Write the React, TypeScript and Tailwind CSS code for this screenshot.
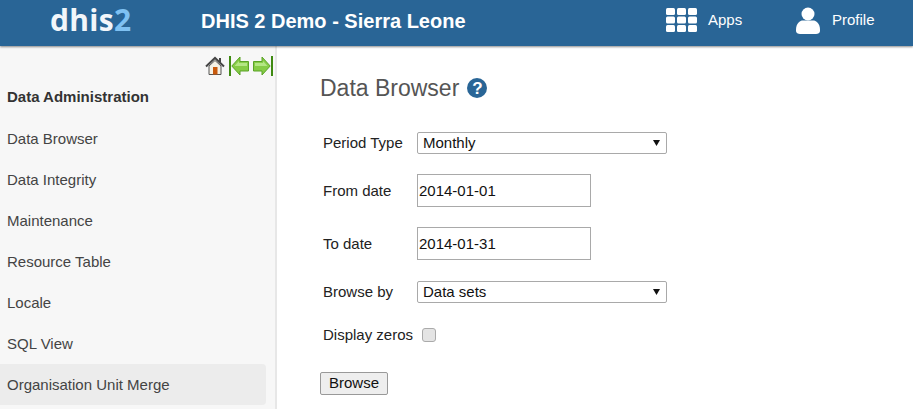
import React from "react";

const items = ["Data Browser", "Data Integrity", "Maintenance", "Resource Table", "Locale", "SQL View"];

function Arrow({ flip }: { flip?: boolean }) {
  return (
    <svg width="20" height="20" viewBox="0 0 20 20" style={flip ? { transform: "scaleX(-1)" } : undefined}>
      <rect x="0" y="0" width="2" height="20" fill="#3f8a12" />
      <path d="M2.8 10 L11 1 V5.5 H19.5 V15 H11 V19 Z" fill="#86cc46" stroke="#5aa326" strokeWidth="1" />
      <path d="M5.5 10 L10 5 V7 H18 V10 Z" fill="#b4e684" />
    </svg>
  );
}

function Select({ value }: { value: string }) {
  return (
    <div className="flex h-[22px] w-[250px] items-center justify-between rounded-[2px] border border-[#a9a9a9] bg-white pl-[5px] pr-[6px] text-[15px] text-[#111]">
      <span>{value}</span>
      <svg width="7" height="6" viewBox="0 0 7 6"><path d="M0 0H7L3.5 6Z" fill="#111" /></svg>
    </div>
  );
}

function DateBox({ value }: { value: string }) {
  return (
    <div className="flex h-[33px] w-[174px] items-center border border-[#a9a9a9] bg-white pl-[1px] pt-[2px] text-[15px] text-[#111]">
      {value}
    </div>
  );
}

function Row({ label, children, className, labelClass = "" }: { label: string; children: React.ReactNode; className: string; labelClass?: string }) {
  return (
    <div className={`flex items-center ${className}`}>
      <span className={`w-[97px] pl-[3px] text-[15px] text-[#222] ${labelClass}`}>{label}</span>
      {children}
    </div>
  );
}

export default function App() {
  return (
    <div className="relative flex h-[409px] w-[913px] flex-col overflow-hidden bg-white font-['Liberation_Sans',sans-serif]">
      <header className="relative z-10 flex h-[46px] shrink-0 items-center bg-[#296596] text-white shadow-[0_1px_2px_rgba(0,0,0,0.45)]">
        <div className="w-[201px] pb-[6px] pl-[50px] font-['Open_Sans',sans-serif] text-[30px] font-bold leading-none tracking-[0.3px] text-[#f2f6fa]">
          dhis<span className="text-[#7fc1f2]">2</span>
        </div>
        <div className="w-[465px] pb-[5px] text-[20px] font-bold">DHIS 2 Demo - Sierra Leone</div>
        <div className="flex w-[130px] items-center pb-[6px]">
          <svg width="31" height="25" viewBox="0 0 31 25" fill="white">
            {[0, 8.5, 17].map((y) =>
              [0, 11, 22].map((x) => <rect key={`${x}-${y}`} x={x} y={y} width="9" height="7" rx="1.5" />)
            )}
          </svg>
          <span className="ml-[11px] text-[15px]">Apps</span>
        </div>
        <div className="flex items-center pb-[6px]">
          <svg width="24" height="27" viewBox="0 0 24 27" fill="white">
            <circle cx="12" cy="7" r="6.5" />
            <path d="M0 23 C0 16 4 13.5 7 13.5 H17 C20 13.5 24 16 24 23 V24 C24 26 22 27 20 27 H4 C2 27 0 26 0 24 Z" />
          </svg>
          <span className="ml-[12px] text-[15px]">Profile</span>
        </div>
      </header>

      <div className="flex min-h-0 flex-1">
        <aside className="w-[277px] shrink-0 border-r-2 border-[#e7e7e7] bg-[#f7f7f7]">
          <div className="flex h-[31px] items-end justify-end gap-[4px] pb-[1px] pr-[2px]">
            <svg width="20" height="20" viewBox="0 0 20 20">
              <path d="M1 10.5 L10 2 L19 10.5" fill="none" stroke="#444" strokeWidth="2" />
              <rect x="14" y="2" width="2" height="4" fill="#444" />
              <path d="M4 10 L10 4.5 L16 10 V18.5 H4 Z" fill="#f4f1e6" stroke="#555" />
              <rect x="8" y="11" width="4.5" height="7.5" fill="#c8590c" />
            </svg>
            <Arrow />
            <Arrow flip />
          </div>
          <div className="flex h-[41px] items-center pb-[1px] pl-[7px] text-[15px] font-bold text-[#333]">Data Administration</div>
          <nav className="flex flex-col">
            {items.map((t) => (
              <div key={t} className="flex h-[41px] items-center pl-[7px] pt-[2px] text-[15px] text-[#444]">{t}</div>
            ))}
            <div className="flex h-[41px] w-[266px] items-center rounded-r-[4px] bg-[#ececec] pl-[7px] pt-[2px] text-[15px] text-[#444]">Organisation Unit Merge</div>
          </nav>
        </aside>

        <main className="flex-1 pl-[43px]">
          <div className="mt-[27px] flex items-center">
            <h1 className="text-[23px] leading-[30px] text-[#555]">Data Browser</h1>
            <span className="ml-[8px] flex h-[20px] w-[20px] items-center justify-center rounded-full bg-[#296596] text-[17px] font-bold leading-none text-white">?</span>
          </div>
          <div className="mt-[29px]">
            <Row label="Period Type" className=""><Select value="Monthly" /></Row>
            <Row label="From date" labelClass="pt-[2px]" className="mt-[19px]"><DateBox value="2014-01-01" /></Row>
            <Row label="To date" labelClass="pt-[2px]" className="mt-[20px]"><DateBox value="2014-01-31" /></Row>
            <Row label="Browse by" className="mt-[21px]"><Select value="Data sets" /></Row>
            <div className="mt-[21px] flex items-center pl-[3px]">
              <span className="text-[15px] text-[#222]">Display zeros</span>
              <span className="ml-[9px] h-[14px] w-[14px] rounded-[3px] border border-[#aaa] bg-[#e4e4e4]" />
            </div>
            <button className="mt-[25px] flex h-[23px] w-[68px] items-center justify-center rounded-[2px] border border-[#999] bg-[#eee] text-[15px] text-[#111]">Browse</button>
          </div>
        </main>
      </div>
    </div>
  );
}
